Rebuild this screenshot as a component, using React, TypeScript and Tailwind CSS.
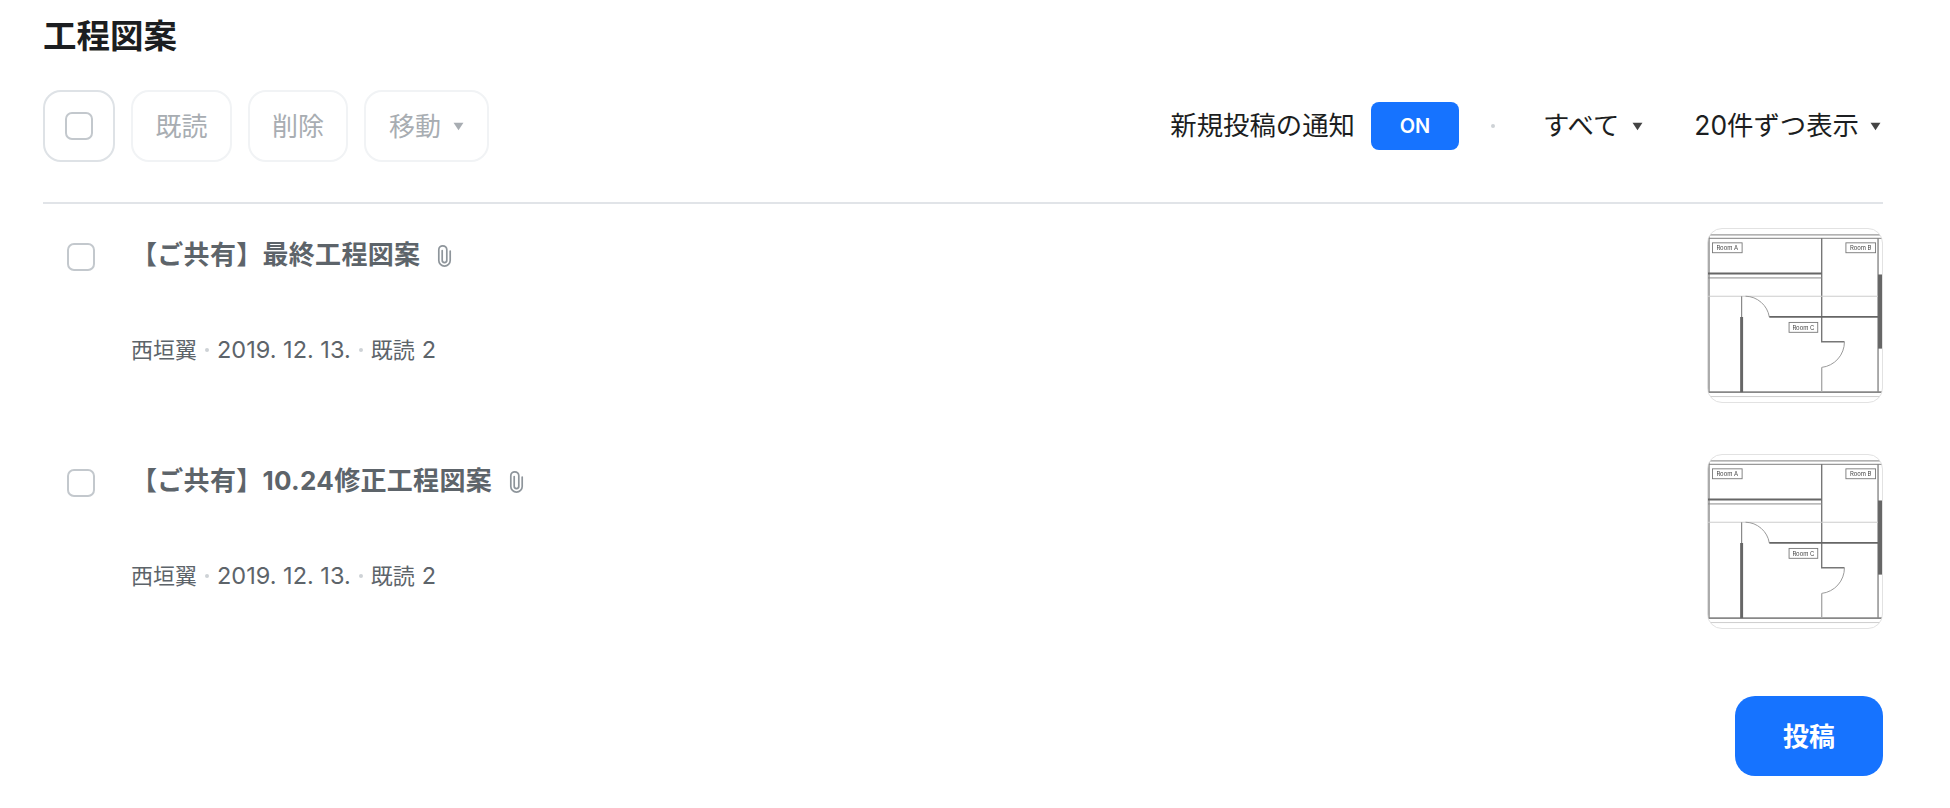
const fontStack = 'font-["Inter","Noto_Sans_CJK_JP",sans-serif]';

function Caret({ className }: { className: string }) {
  return (
    <svg viewBox="0 0 10 8" className={`h-[9px] w-[11px] shrink-0 ${className}`}>
      <path d="M0.5 0.5h9L5 7.5z" fill="currentColor" />
    </svg>
  );
}

function Clip() {
  return (
    <svg viewBox="0 0 15 23" className="h-[23px] w-[15px] shrink-0 text-[#8e959b]" fill="none" stroke="currentColor" strokeWidth="1.7" strokeLinecap="round">
      <path d="M5.2 6.5v9.8a2.3 2.3 0 0 0 4.6 0V5.8a4 4 0 0 0-8 0v10.6a5.7 5.7 0 0 0 11.4 0V7" />
    </svg>
  );
}

function Dot() {
  return <span className="mx-[8px] h-[4px] w-[4px] shrink-0 rounded-full bg-[#ced2d6]" />;
}

function Checkbox() {
  return <span className="block h-[28px] w-[28px] shrink-0 rounded-[7px] border-2 border-[#c3c8cd] bg-white" />;
}

function FloorPlan() {
  return (
    <div className="h-[175px] w-[176px] shrink-0 overflow-hidden rounded-[15px] border border-[#e2e2e2] bg-white">
      <svg viewBox="0 0 176 175" className="block h-full w-full blur-[0.4px]" fill="none">
        <path d="M0 6h176M0 9.5h176" stroke="#999" strokeWidth="1.2" />
        <path d="M0 165h176" stroke="#888" strokeWidth="2" />
        <path d="M0 169.5h176" stroke="#ccc" strokeWidth="1" />
        <path d="M1 6v160M172 9v157" stroke="#888" strokeWidth="1.4" />
        <path d="M174 46v75" stroke="#666" strokeWidth="4" />
        <path d="M115 9v105h23" stroke="#777" strokeWidth="1.4" />
        <path d="M138 114a26 26 0 0 1-23 26" stroke="#999" strokeWidth="1" />
        <path d="M115 140v25" stroke="#aaa" strokeWidth="1.4" />
        <path d="M0 45h115" stroke="#666" strokeWidth="1.8" />
        <path d="M0 49.5h115" stroke="#888" strokeWidth="1" />
        <path d="M0 68h172" stroke="#ccc" strokeWidth="1.2" />
        <path d="M34 68v22" stroke="#888" strokeWidth="1.2" />
        <path d="M34 89v76" stroke="#666" strokeWidth="3" />
        <path d="M38 68a25 25 0 0 1 24 21" stroke="#999" strokeWidth="1" />
        <path d="M62 89h110" stroke="#666" strokeWidth="1.8" />
        <rect x="4.5" y="14" width="30" height="10" fill="#fff" stroke="#777" strokeWidth="0.9" />
        <rect x="139.5" y="14" width="30" height="10" fill="#fff" stroke="#777" strokeWidth="0.9" />
        <rect x="82" y="94.5" width="29" height="10" fill="#fff" stroke="#777" strokeWidth="0.9" />
        <text x="19.5" y="21.5" fontSize="6" textAnchor="middle" fill="#444" fontFamily="Inter, sans-serif">Room A</text>
        <text x="154.5" y="21.5" fontSize="6" textAnchor="middle" fill="#444" fontFamily="Inter, sans-serif">Room B</text>
        <text x="96.5" y="102" fontSize="6" textAnchor="middle" fill="#444" fontFamily="Inter, sans-serif">Room C</text>
      </svg>
    </div>
  );
}

function Row({ title }: { title: string }) {
  return (
    <div className="flex h-[226px] items-start pt-[24px]">
      <div className="mt-[15px] pl-[24px]">
        <Checkbox />
      </div>
      <div className="ml-[37px] min-w-0 flex-1">
        <div className="mt-[14px] flex h-[26px] items-center">
          <span className="-ml-px text-[26px] font-bold leading-[26px] tracking-[0.3px] text-[#5d646a]">{title}</span>
          <span className="ml-[17px]">
            <Clip />
          </span>
        </div>
        <div className="mt-[70px] flex h-[24px] -ml-px items-center text-[22px] leading-[24px] text-[#5d646a]">
          <span>西垣翼</span>
          <Dot />
          <span className="text-[23.5px]">2019. 12. 13.</span>
          <Dot />
          <span>既読</span>
          <span className="ml-[7px] text-[23.5px]">2</span>
        </div>
      </div>
      <FloorPlan />
    </div>
  );
}

const toolBtn = 'flex h-[72px] items-center justify-center rounded-[18px] border-2 border-[#f1f3f5] bg-white text-[26px] text-[#a8adb2]';

export default function App() {
  return (
    <div className={`h-[808px] w-full overflow-hidden bg-white pl-[43px] pr-[67px] ${fontStack}`}>
      <h1 className="pt-[16px] text-[33.5px] font-bold leading-[40px] text-[#1c1e21]">工程図案</h1>

      <div className="mt-[34px] flex h-[72px] items-center">
        <div className="flex gap-[16px]">
          <button type="button" className="flex h-[72px] w-[72px] items-center justify-center rounded-[18px] border-2 border-[#dee2e6] bg-white">
            <Checkbox />
          </button>
          <button type="button" className={`${toolBtn} w-[101px]`}>既読</button>
          <button type="button" className={`${toolBtn} w-[100px]`}>削除</button>
          <button type="button" className={`${toolBtn} w-[125px] gap-[12px]`}>
            移動
            <Caret className="text-[#a8adb2]" />
          </button>
        </div>
        <div className="ml-auto flex items-center text-[26.4px] text-[#1c1e21]">
          <span>新規投稿の通知</span>
          <span className="ml-[16px] flex h-[48px] w-[88px] items-center justify-center rounded-[8px] bg-[#1673ff] text-[20px] font-semibold text-white">ON</span>
          <span className="ml-[32px] h-[4px] w-[4px] rounded-full bg-[#ced2d6]" />
          <span className="ml-[48px]">すべて</span>
          <Caret className="ml-[13px] text-[#444]" />
          <span className="ml-[51px]">20件ずつ表示</span>
          <Caret className="ml-[11px] mr-[2px] text-[#444]" />
        </div>
      </div>

      <div className="mt-[40px] h-[2px] bg-[#e1e4e8]" />

      <Row title="【ご共有】最終工程図案" />
      <Row title="【ご共有】10.24修正工程図案" />

      <div className="mt-[40px] flex justify-end">
        <button type="button" className="h-[80px] w-[148px] rounded-[20px] bg-[#1673ff] text-[26px] font-bold text-white">投稿</button>
      </div>
    </div>
  );
}
